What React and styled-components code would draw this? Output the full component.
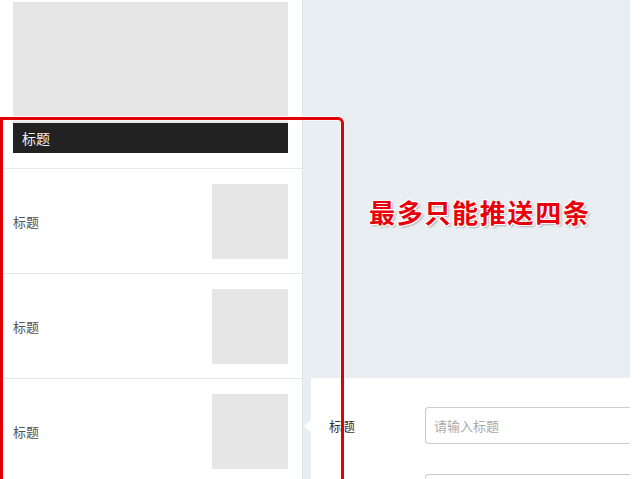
import styled, { createGlobalStyle } from "styled-components"

const GlobalStyle = createGlobalStyle`
  html, body {
    margin: 0;
    padding: 0;
    background: #ffffff;
    font-family: "Noto Sans CJK SC", "Noto Sans", sans-serif;
  }
`

const Page = styled.div`
  position: relative;
  display: flex;
  width: 643px;
  height: 479px;
  overflow: hidden;
  background: #ffffff;
`

const LeftPanel = styled.div`
  width: 302px;
  flex-shrink: 0;
  background: #ffffff;
  border-right: 1px solid #dfe4e8;
`

const CoverBlock = styled.div`
  padding: 2px 14px 15px 13px;
  border-bottom: 1px solid #e6e9ec;
`

const Cover = styled.div`
  position: relative;
  height: 151px;
  background: #e6e6e6;
`

const CoverTitle = styled.div`
  position: absolute;
  left: 0;
  right: 0;
  bottom: 0;
  height: 30px;
  background: #222222;
  color: #f2f2f2;
  font-size: 14px;
  line-height: 30px;
  padding-left: 9px;
`

const Row = styled.div`
  display: flex;
  align-items: center;
  justify-content: space-between;
  height: 104px;
  padding: 0 14px 0 13px;
  border-bottom: 1px solid #e6e9ec;
`

const RowTitle = styled.span`
  font-size: 13px;
  color: #555555;
`

const Thumb = styled.div`
  width: 76px;
  height: 75px;
  background: #e6e6e6;
`

const RightColumn = styled.div`
  width: 327px;
  flex-shrink: 0;
  background: #e9eef2;
  display: flex;
  flex-direction: column;
`

const Notice = styled.div`
  flex-shrink: 0;
  height: 378px;
  box-sizing: border-box;
  padding: 197px 0 0 66px;
  font-size: 26px;
  font-weight: 700;
  line-height: 30px;
  letter-spacing: 1.7px;
  color: #e8000b;
  text-shadow:
    1px 1px 0 #fff, -1px -1px 0 #fff, 1px -1px 0 #fff, -1px 1px 0 #fff,
    2px 2px 2px rgba(0, 0, 0, 0.25);
`

const FormPanel = styled.div`
  position: relative;
  flex: 1 0 auto;
  margin-left: 8px;
  background: #ffffff;
  padding: 29px 0 0 18px;
  display: flex;
  flex-direction: column;
  gap: 30px;

  &::before {
    content: "";
    position: absolute;
    left: -7px;
    top: 42px;
    border-top: 6px solid transparent;
    border-bottom: 6px solid transparent;
    border-right: 7px solid #ffffff;
  }
`

const FormRow = styled.div`
  display: flex;
  align-items: center;
`

const Label = styled.label`
  width: 96px;
  font-size: 13px;
  color: #333333;
`

const Input = styled.input`
  flex: 1;
  height: 37px;
  box-sizing: border-box;
  border: 1px solid #cccccc;
  border-right: none;
  border-radius: 4px 0 0 4px;
  padding: 0 8px;
  font-family: "Noto Sans CJK SC", sans-serif;
  font-size: 13px;
  color: #333;
  outline: none;
  &::placeholder {
    color: #aaaaaa;
  }
`

const Annotation = styled.div`
  position: absolute;
  left: 0;
  top: 117px;
  width: 338px;
  height: 420px;
  border: 3px solid #e30000;
  border-radius: 0 6px 0 0;
  box-shadow: 0 0 0 1px rgba(255, 255, 255, 0.7), inset 0 0 0 1px rgba(255, 255, 255, 0.5);
  pointer-events: none;
`

export default function App() {
  const items = ["标题", "标题", "标题"]

  return (
    <>
      <GlobalStyle />
      <Page>
        <LeftPanel>
          <CoverBlock>
            <Cover>
              <CoverTitle>标题</CoverTitle>
            </Cover>
          </CoverBlock>
          {items.map((title, index) => (
            <Row key={index}>
              <RowTitle>{title}</RowTitle>
              <Thumb />
            </Row>
          ))}
        </LeftPanel>
        <RightColumn>
          <Notice>最多只能推送四条</Notice>
          <FormPanel>
            <FormRow>
              <Label>标题</Label>
              <Input placeholder="请输入标题" />
            </FormRow>
            <FormRow>
              <Label />
              <Input />
            </FormRow>
          </FormPanel>
        </RightColumn>
        <Annotation />
      </Page>
    </>
  )
}
